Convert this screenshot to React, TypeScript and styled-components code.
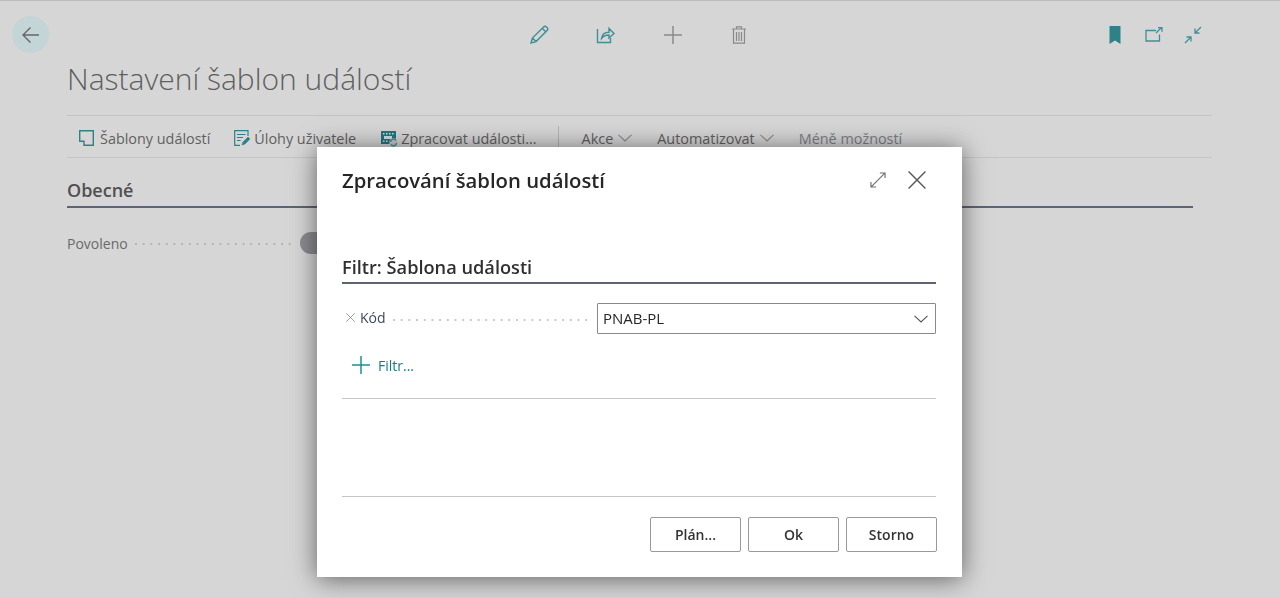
import React from 'react';
import styled, { createGlobalStyle } from 'styled-components';

const GlobalStyle = createGlobalStyle`
  html, body {
    margin: 0;
    height: 100%;
    overflow: hidden;
    background: #d6d6d6;
    font-family: "Open Sans", "Liberation Sans", sans-serif;
  }
  * { box-sizing: border-box; }
`;

const Page = styled.div`
  height: 598px;
  border-top: 1px solid #bcbcbc;
  background: #d6d6d6;
  padding: 15px 68px 0 12px;
`;

const TopBar = styled.div`
  display: flex;
  align-items: center;
  height: 37px;
`;

const BackButton = styled.button`
  width: 37px;
  height: 37px;
  padding: 0;
  border: none;
  border-radius: 50%;
  background: #c3d5d6;
  display: flex;
  align-items: center;
  justify-content: center;
`;

const CenterActions = styled.div`
  display: flex;
  align-items: center;
  margin-left: 457px;
`;

const RightActions = styled.div`
  display: flex;
  align-items: center;
  margin-left: auto;
`;

const ActionSlot = styled.span<{ $width: number }>`
  display: flex;
  justify-content: center;
  width: ${props => props.$width}px;
`;

const Content = styled.div`
  padding-left: 55px;
`;

const Title = styled.h1`
  margin: 4px 0 0;
  height: 58px;
  font-size: 30px;
  line-height: 44px;
  font-weight: 300;
  color: #5f5f5f;
`;

const Toolbar = styled.div`
  display: flex;
  align-items: center;
  height: 43px;
  padding: 3px 0 0 12px;
  border-top: 1px solid #c4c4c4;
  border-bottom: 1px solid #c4c4c4;
`;

const ToolItem = styled.span<{ $gap: number; $inner?: number; $muted?: boolean }>`
  display: flex;
  align-items: center;
  gap: ${props => props.$inner ?? 5}px;
  margin-right: ${props => props.$gap}px;
  font-size: 14.4px;
  color: ${props => (props.$muted ? '#7d7f86' : '#616161')};
  white-space: nowrap;
`;

const Separator = styled.span`
  width: 1px;
  height: 25px;
  background: #b5b5b5;
  margin-right: 23px;
`;

const Section = styled.div`
  margin-right: 19px;
  padding-top: 19px;
`;

const SectionTitle = styled.h2`
  margin: 0;
  height: 31px;
  border-bottom: 2px solid #5d6472;
  font-size: 18px;
  line-height: 26px;
  font-weight: 600;
  color: #505050;
`;

const FieldRow = styled.div`
  display: flex;
  align-items: center;
  height: 24px;
  margin-top: 23px;
  font-size: 14px;
  color: #6a6a6a;
`;

const DotLeader = styled.span<{ $color: string }>`
  height: 2px;
  margin-top: 2px;
  background-image: linear-gradient(to right, ${props => props.$color} 2px, transparent 2px);
  background-size: 7.7px 2px;
`;

const PageLeader = styled(DotLeader)`
  width: 161px;
  margin-left: 7px;
  margin-right: 4px;
`;

const Toggle = styled.span`
  width: 40px;
  height: 22px;
  border-radius: 11px;
  background: #8c8c92;
`;

const Overlay = styled.div`
  position: fixed;
  inset: 0;
  padding: 147px 0 0 317px;
`;

const Dialog = styled.div`
  width: 645px;
  height: 430px;
  background: #fff;
  padding: 0 26px 0 25px;
  box-shadow: 0 2px 24px rgba(0, 0, 0, 0.55);
  display: flex;
  flex-direction: column;
  color: #2b2b2b;
`;

const DialogHeader = styled.div`
  display: flex;
  align-items: center;
  height: 66px;
`;

const DialogTitle = styled.h2`
  margin: 0;
  font-size: 20.3px;
  font-weight: 600;
  color: #262626;
`;

const DialogTools = styled.div`
  display: flex;
  align-items: center;
  gap: 22px;
  margin-left: auto;
  margin-right: 10px;
`;

const FilterTitle = styled.h3`
  margin: 38px 0 0;
  height: 33px;
  border-bottom: 2px solid #5d6472;
  font-size: 18.2px;
  line-height: 32px;
  font-weight: 600;
  color: #303030;
`;

const FilterRow = styled.div`
  display: flex;
  align-items: center;
  margin-top: 19px;
  height: 31px;
  padding-left: 4px;
  font-size: 14px;
  color: #3c4a5a;
`;

const RemoveFilter = styled.span`
  margin-bottom: 2px;
`;

const FilterLabel = styled.span`
  margin: 0 0 2px 5px;
`;

const FilterLeader = styled(DotLeader)`
  flex: 1;
  margin-left: 7px;
  margin-right: 8px;
`;

const SelectBox = styled.div`
  width: 339px;
  height: 31px;
  border: 1px solid #8a8a8a;
  border-radius: 1px;
  display: flex;
  align-items: center;
  justify-content: space-between;
  padding: 0 7px 0 5px;
  font-size: 15px;
  color: #262626;
`;

const SelectValue = styled.span`
  margin-bottom: 2px;
`;

const AddFilter = styled.div`
  display: flex;
  align-items: center;
  gap: 8px;
  height: 32px;
  margin-top: 16px;
  padding: 0 0 2px 10px;
  font-size: 14px;
  color: #0f7f86;
`;

const Divider = styled.div<{ $top: number }>`
  margin-top: ${props => props.$top}px;
  border-top: 1px solid #c6c6c6;
`;

const DialogFooter = styled.div`
  display: flex;
  justify-content: flex-end;
  gap: 7px;
  margin: 20px -1px 0 0;
`;

const FooterButton = styled.button`
  width: 91px;
  height: 35px;
  padding: 0;
  background: #fff;
  border: 1.5px solid #999;
  border-radius: 2px;
  font-family: inherit;
  font-size: 14px;
  font-weight: 600;
  color: #333;
`;

const Icon = styled.svg`
  display: block;
  flex: none;
  fill: none;
`;

const teal = '#3f9096';
const tealDark = '#2f8188';
const gray = '#8a8a8a';

const ArrowBack = () => (
  <Icon width="20" height="20" viewBox="0 0 20 20" stroke="#666" strokeWidth="1.4">
    <path d="M18 10H2M9.5 2.5 2 10l7.500 7.500" />
  </Icon>
);

const Pencil = () => (
  <Icon width="20" height="20" viewBox="0 0 20 20" stroke={teal} strokeWidth="1.4">
    <path d="M2 18l1.400-5L14.600 1.900c.8-.8 2-.8 2.800 0l.7.7c.8.8.8 2 0 2.800L7 16.600 2 18zM3.400 13 7 16.600M13.200 3.300l3.500 3.500" />
  </Icon>
);

const ShareIcon = () => (
  <Icon width="19" height="18" viewBox="0 0 19 18" stroke={teal} strokeWidth="1.4">
    <path d="M1.500 3v13.500h13V12M5.500 12.500c.5-4 3.500-6.300 7.500-6.300V2.500L18 7.500l-5 4.500V9c-3 0-5.500 1-7.500 3.500z" />
  </Icon>
);

const PlusIcon = ({ size, color }: { size: number; color: string }) => (
  <Icon width={size} height={size} viewBox="0 0 18 18" stroke={color} strokeWidth="1.5">
    <path d="M0 9h18M9 0v18" />
  </Icon>
);

const TrashIcon = () => (
  <Icon width="14" height="18" viewBox="0 0 14 18" stroke={gray} strokeWidth="1.2">
    <path d="M0 3h14M4.500 3V.8h5V3M1.500 3v14.200h11V3M4.500 6v9M7 6v9M9.500 6v9" />
  </Icon>
);

const Bookmark = () => (
  <Icon width="12" height="18" viewBox="0 0 12 18">
    <path d="M.5 0h11v18L6 14.500.5 18z" fill={tealDark} />
  </Icon>
);

const PopOut = () => (
  <Icon width="18" height="15" viewBox="0 0 18 15" stroke={teal} strokeWidth="1.3">
    <path d="M11 3.500H1v10.500h13.500V7.500M11 6l5.500-5.500M13 .7h4v4" />
  </Icon>
);

const Collapse = () => (
  <Icon width="18" height="18" viewBox="0 0 18 18" stroke={teal} strokeWidth="1.3">
    <path d="M17 1l-6 6M11 2.500V7h4.500M1 17l6-6M2.500 11H7v4.500" />
  </Icon>
);

const TemplateIcon = () => (
  <Icon width="15" height="16" viewBox="0 0 15 16" stroke={tealDark} strokeWidth="1.4">
    <path d="M.7.7h13.600v14.600H5v-4H.7z" />
  </Icon>
);

const TasksIcon = () => (
  <Icon width="16" height="16" viewBox="0 0 16 16" stroke={tealDark} strokeWidth="1.2">
    <path d="M14 6V.7H.7v14.600H6M3 4.500h8.500M3 7.500h6M3 10.500h3.500" />
    <path d="M8 15l1-3 5-5 2 2-5 5z" fill={tealDark} strokeWidth="0.6" />
  </Icon>
);

const ProcessIcon = () => (
  <Icon width="17" height="17" viewBox="0 0 17 17">
    <path d="M0 1h15v13H0z" fill="#27767d" />
    <path d="M2 3h1.500v1.500H2zM5 3h1.500v1.500H5zM8 3h1.500v1.500H8zM11 3h1.500v1.500H11zM2 10.500h1.500V12H2zM5 10.500h1.500V12H5zM3 6h8v3H3z" fill="#cfe0e0" />
    <circle cx="12.500" cy="12.500" r="4.200" fill="#c9c9c9" />
    <path d="M9.500 12a3 3 0 0 1 5.500-1.500M15.500 13a3 3 0 0 1-5.500 1.500" stroke="#3f9096" strokeWidth="1.4" />
  </Icon>
);

const Chevron = ({ color, width }: { color: string; width: number }) => (
  <Icon width={width} height={width / 2 + 1} viewBox="0 0 14 8" stroke={color} strokeWidth="1.1">
    <path d="M.5.8 7 7l6.500-6.200" />
  </Icon>
);

const ExpandIcon = () => (
  <Icon width="16" height="16" viewBox="0 0 17 17" stroke="#6e6e6e" strokeWidth="1.2">
    <path d="M1 16 16 1M10.500 1H16v5.500M1 10.500V16h5.500" />
  </Icon>
);

const CloseIcon = ({ size, color }: { size: number; color: string }) => (
  <Icon width={size} height={size} viewBox="0 0 16 16" stroke={color} strokeWidth="1.3">
    <path d="M.5.5l15 15M15.500.5l-15 15" />
  </Icon>
);

export default function App() {
  return (
    <>
      <GlobalStyle />
      <Page>
        <TopBar>
          <BackButton>
            <ArrowBack />
          </BackButton>
          <CenterActions>
            <ActionSlot $width={66}>
              <Pencil />
            </ActionSlot>
            <ActionSlot $width={66}>
              <ShareIcon />
            </ActionSlot>
            <ActionSlot $width={70}>
              <PlusIcon size={18} color={gray} />
            </ActionSlot>
            <ActionSlot $width={62}>
              <TrashIcon />
            </ActionSlot>
          </CenterActions>
          <RightActions>
            <ActionSlot $width={39}>
              <Bookmark />
            </ActionSlot>
            <ActionSlot $width={39}>
              <PopOut />
            </ActionSlot>
            <ActionSlot $width={39}>
              <Collapse />
            </ActionSlot>
          </RightActions>
        </TopBar>
        <Content>
          <Title>Nastavení šablon událostí</Title>
          <Toolbar>
            <ToolItem $gap={24} $inner={6}>
              <TemplateIcon />
              Šablony událostí
            </ToolItem>
            <ToolItem $gap={25} $inner={4}>
              <TasksIcon />
              Úlohy uživatele
            </ToolItem>
            <ToolItem $gap={21} $inner={3}>
              <ProcessIcon />
              Zpracovat události...
            </ToolItem>
            <Separator />
            <ToolItem $gap={25}>
              Akce
              <Chevron color="#8a8a8a" width={14} />
            </ToolItem>
            <ToolItem $gap={25}>
              Automatizovat
              <Chevron color="#8a8a8a" width={14} />
            </ToolItem>
            <ToolItem $gap={0} $muted>
              Méně možností
            </ToolItem>
          </Toolbar>
          <Section>
            <SectionTitle>Obecné</SectionTitle>
            <FieldRow>
              Povoleno
              <PageLeader $color="#b4b4b4" />
              <Toggle />
            </FieldRow>
          </Section>
        </Content>
      </Page>
      <Overlay>
        <Dialog>
          <DialogHeader>
            <DialogTitle>Zpracování šablon událostí</DialogTitle>
            <DialogTools>
              <ExpandIcon />
              <CloseIcon size={18} color="#5a5a5a" />
            </DialogTools>
          </DialogHeader>
          <FilterTitle>Filtr: Šablona události</FilterTitle>
          <FilterRow>
            <RemoveFilter>
              <CloseIcon size={9} color="#777" />
            </RemoveFilter>
            <FilterLabel>Kód</FilterLabel>
            <FilterLeader $color="#c8c8c8" />
            <SelectBox>
              <SelectValue>PNAB-PL</SelectValue>
              <Chevron color="#555" width={14} />
            </SelectBox>
          </FilterRow>
          <AddFilter>
            <PlusIcon size={18} color="#1f8f96" />
            Filtr...
          </AddFilter>
          <Divider $top={16} />
          <Divider $top={97} />
          <DialogFooter>
            <FooterButton>Plán...</FooterButton>
            <FooterButton>Ok</FooterButton>
            <FooterButton>Storno</FooterButton>
          </DialogFooter>
        </Dialog>
      </Overlay>
    </>
  );
}
